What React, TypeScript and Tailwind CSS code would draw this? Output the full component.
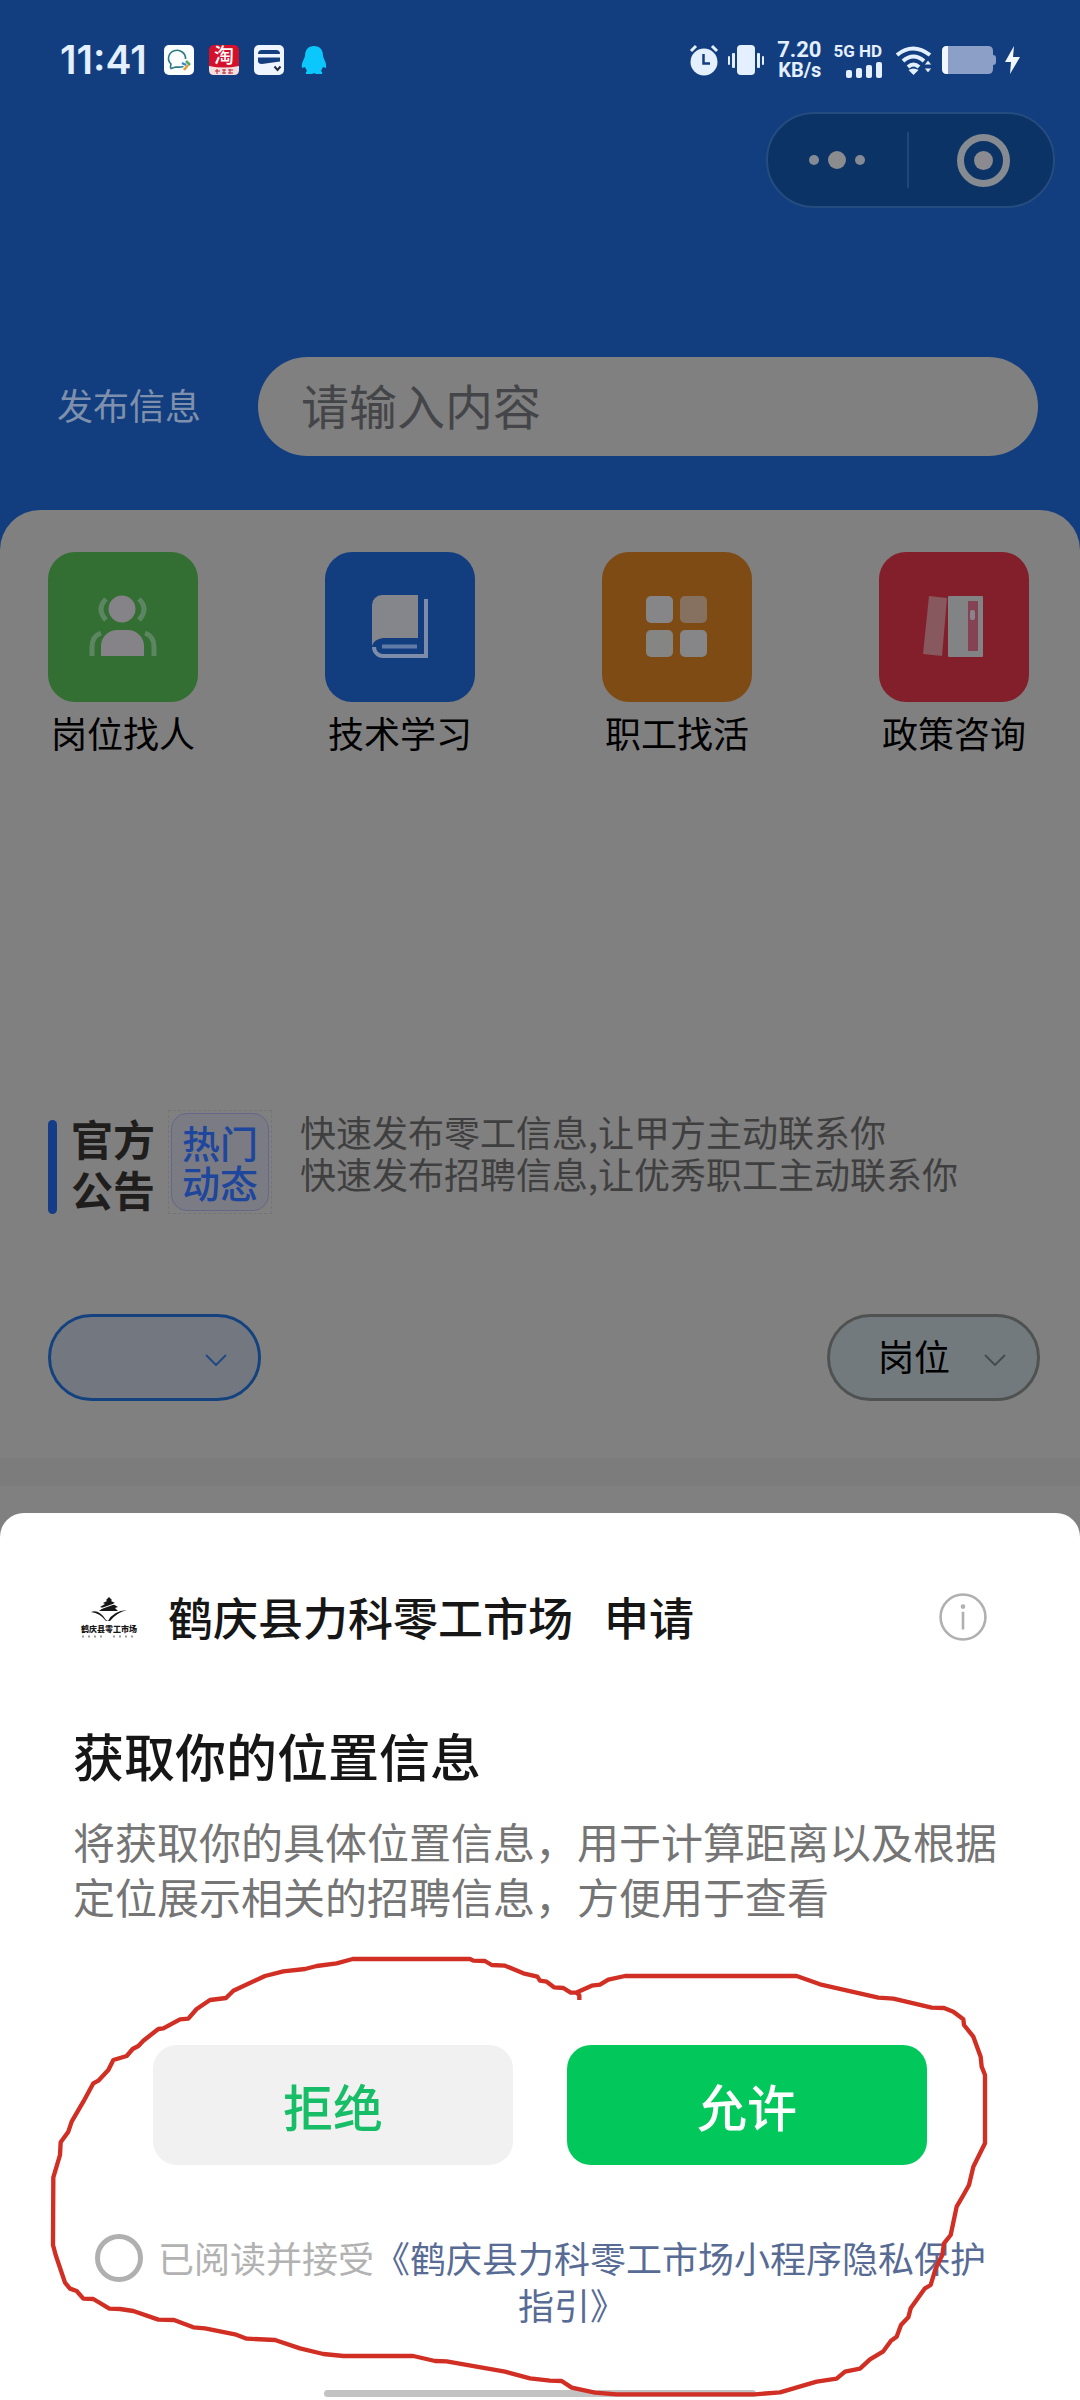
import * as React from "react"

const services = [
  { label: "岗位找人", tile: "bg-[#336e33]", icon: <PeopleIcon /> },
  { label: "技术学习", tile: "bg-[#123e80]", icon: <BookIcon /> },
  { label: "职工找活", tile: "bg-[#7f4b14]", icon: <GridIcon /> },
  { label: "政策咨询", tile: "bg-[#821f2b]", icon: <BinderIcon /> },
]

function PeopleIcon() {
  return (
    <svg viewBox="0 0 150 150" className="size-full" fill="none">
      <circle cx="74" cy="57" r="13.500" fill="#858387" />
      <path d="M53 104V94a16 16 0 0 1 16-16h11a16 16 0 0 1 16 16v10z" fill="#858387" />
      <path
        d="M58 47q-10 10 0 21M91 47q10 10 0 21M44 104V95q0-11 9-14M106 104V95q0-11-9-14"
        stroke="#5c8561"
        strokeWidth="5"
      />
    </svg>
  )
}

function BookIcon() {
  return (
    <svg viewBox="0 0 150 150" className="size-full" fill="none">
      <path d="M47 98V53a10 10 0 0 1 10-10h36v43H58q-9 1-11 8z" fill="#85868c" />
      <path d="M101 47v57H58a9 9 0 0 1-9-9" stroke="#7d8ca8" strokeWidth="4" />
      <path d="M57 94.500h35" stroke="#5f7ba6" strokeWidth="4" />
    </svg>
  )
}

function GridIcon() {
  return (
    <svg viewBox="0 0 150 150" className="size-full">
      <rect x="44" y="44" width="27" height="27" rx="5" fill="#868587" />
      <rect x="78" y="44" width="27" height="27" rx="5" fill="#86705f" />
      <rect x="44" y="78" width="27" height="27" rx="5" fill="#858683" />
      <rect x="78" y="78" width="27" height="27" rx="5" fill="#868587" />
    </svg>
  )
}

function BinderIcon() {
  return (
    <svg viewBox="0 0 150 150" className="size-full">
      <path d="M50 44l18 2-5 58-19-2z" fill="#88585f" />
      <rect x="69" y="44" width="35" height="61" rx="1" fill="#828384" />
      <rect x="89" y="49" width="10" height="50" fill="#844254" />
      <rect x="91" y="58" width="5" height="10" rx="2" fill="#8c8388" />
    </svg>
  )
}

function StatusBar() {
  return (
    <div className="flex h-[112px] items-start justify-between px-[60px] pt-[38px] text-[#e4efff]">
      <div className="flex h-[44px] items-center">
        <span className="w-[104px] font-['Inter'] text-[39px] font-semibold leading-[44px]">11:41</span>
        <div className="flex items-center gap-[15px]">
          <svg viewBox="0 0 30 30" className="size-[30px]">
            <rect width="30" height="30" rx="5" fill="#fbfdfd" />
            <path
              d="M19.500 21.500q-3 1-8 .5L7 23.500q-1-1 0-4.500A8.500 8 0 1 1 21.500 14"
              fill="none"
              stroke="#2d7a86"
              strokeWidth="1.600"
            />
            <path d="M18 18l4 2" stroke="#3d86c9" strokeWidth="2.500" />
            <path d="M22 16l4 4" stroke="#58a868" strokeWidth="2.500" />
            <path d="M24 20l-4 5" stroke="#e2a13a" strokeWidth="2.500" />
          </svg>
          <div className="flex size-[30px] flex-col items-center rounded-[5px] bg-[#d4112b]">
            <span className="h-[21px] text-[20px] font-medium leading-[20px] text-white">淘</span>
            <svg viewBox="0 0 30 9" className="h-[9px] w-[30px]">
              <path d="M0 0q15 3 30 0v4q0 5-5 5H5q-5 0-5-5z" fill="#f3dfe0" />
              <path d="M6 5h5M8 3v5M13 4h4M13 7h4M15 3v5M19 4h5M19 7h5M21 3v5" stroke="#b8283c" />
            </svg>
          </div>
          <svg viewBox="0 0 30 30" className="size-[30px]" fill="none">
            <rect width="30" height="30" rx="5" fill="#eff5ff" />
            <path d="M4 9q0-4 4-4h14q4 0 4 4zM4 12.500h22v4L8 19q-4 0-4-3z" fill="#143e80" />
            <path d="M20.500 21.500l3 3.500 3-3.500" stroke="#242b3d" strokeWidth="2" />
          </svg>
          <svg viewBox="0 0 30 30" className="size-[30px]">
            <path
              d="M15 1c6 0 9 4 9 10 1 4 4 7 3 12l-3-1-2 4q2 1 1 3h-6l-2-1-2 1H7q-1-2 1-3l-2-4-3 1c-1-5 2-8 3-12 0-6 3-10 9-10z"
              fill="#0bc7fb"
            />
          </svg>
        </div>
      </div>

      <div className="flex h-[44px] items-center">
        <svg viewBox="0 0 30 32" className="h-[32px] w-[30px]" fill="none">
          <circle cx="15" cy="18" r="13.500" fill="#e4efff" />
          <path d="M2 7l5-5M28 7l-5-5" stroke="#e4efff" strokeWidth="3" />
          <path d="M14.500 10v9.500H21" stroke="#143e80" strokeWidth="2.500" />
        </svg>
        <svg viewBox="0 0 36 30" className="ml-[9px] h-[30px] w-[36px]" fill="#e4efff">
          <rect x="9" width="18" height="30" rx="4" />
          <rect x="4" y="8" width="3" height="15" rx="1" />
          <rect x="0" y="11" width="2" height="9" rx="1" />
          <rect x="29" y="8" width="3" height="15" rx="1" />
          <rect x="34" y="11" width="2" height="9" rx="1" />
        </svg>
        <div className="ml-[13px] flex flex-col items-end font-['Roboto'] font-bold">
          <span className="text-[22px] leading-[20px]">7.20</span>
          <span className="text-[20px] leading-[20px]">KB/s</span>
        </div>
        <div className="ml-[12px] flex flex-col items-end gap-[2px] font-['Roboto'] font-bold">
          <span className="text-[17px] leading-[18px]">5G HD</span>
          <svg viewBox="0 0 36 16" className="h-[16px] w-[36px]" fill="#e4efff">
            <rect y="8" width="6" height="8" rx="2" />
            <rect x="10" y="6" width="6" height="10" rx="2" />
            <rect x="20" y="3" width="6" height="13" rx="2" />
            <rect x="30" width="6" height="16" rx="2" />
          </svg>
        </div>
        <svg viewBox="0 0 38 30" className="ml-[13px] h-[30px] w-[38px]" fill="none">
          <path d="M2 10q16-13 33 0M8 16q10.500-9 21 0M13 22q5.500-5 11 0" stroke="#e4efff" strokeWidth="4" />
          <path d="M13.500 25q5-3 10 0l-5 5z" fill="#e4efff" />
          <path d="M33 15l4 5h-8zM33 28l4-5h-8z" fill="#e4efff" stroke="#143e80" strokeWidth="1" />
        </svg>
        <svg viewBox="0 0 54 28" className="ml-[9px] h-[28px] w-[54px]">
          <path d="M5 0h41q5 0 5 5v4q3 0 3 3v4q0 3-3 3v4q0 5-5 5H5q-5 0-5-5V5q0-5 5-5z" fill="#8b9fc7" />
          <path d="M6 0v28H5q-5 0-5-5V5q0-5 5-5z" fill="#f2f7ff" />
        </svg>
        <svg viewBox="0 0 15 28" className="ml-[9px] h-[28px] w-[15px]" fill="#f2f7ff">
          <path d="M9 0L0 16h6L5 28l10-17H8z" />
        </svg>
      </div>
    </div>
  )
}

function Chevron({ className }: { className: string }) {
  return (
    <svg
      viewBox="0 0 22 12"
      className={`pointer-events-none absolute right-[34px] top-[40px] h-[12px] w-[22px] ${className}`}
      fill="none"
      stroke="currentColor"
      strokeWidth="2"
    >
      <path d="M1 1l10 10L21 1" />
    </svg>
  )
}

function BrandLogo() {
  return (
    <div className="flex w-[56px] shrink-0 flex-col items-center">
      <svg viewBox="0 0 36 24" className="h-[24px] w-[36px]" fill="#161616">
        <path d="M18 0l3 3-1 1 4 2-2 1 5 3-3 1 3 3H8l4-3-3-1 5-3-2-1 4-2-1-1z" />
        <path d="M0 15q8-3 15 8l2 1q5-10 19-11-11 3-17 11h-4Q9 16 0 15z" />
        <path d="M9 12l17-6" stroke="#fff" strokeWidth="1" />
      </svg>
      <span className="mt-[3px] whitespace-nowrap text-[8px] font-black leading-[9px] text-[#161616]">鹤庆县零工市场</span>
      <svg viewBox="0 0 54 3" className="mt-[2px] h-[3px] w-[54px]" stroke="#999">
        <path d="M0 1.500h22M31 1.500h23" strokeWidth="2" strokeDasharray="2 4" />
      </svg>
    </div>
  )
}

function PermissionSheet() {
  return (
    <section
      role="dialog"
      aria-labelledby="permission-title"
      className="relative rounded-t-[24px] bg-white px-[73px] pb-[3px] pt-[76px]"
    >
      <div className="flex h-[56px] items-center pl-2 pr-5">
        <BrandLogo />
        <p className="ml-[31px] flex gap-[31px] text-[45px] font-medium leading-[56px] text-[#161616]">
          <span>鹤庆县力科零工市场</span>
          <span>申请</span>
        </p>
        <button type="button" aria-label="说明" className="ml-auto size-[48px]">
          <svg viewBox="0 0 46 46" className="size-full" fill="none" stroke="#b0b0b0" strokeWidth="2.500">
            <circle cx="23" cy="23" r="21.500" />
            <path d="M23 18v17" />
            <circle cx="23" cy="13" r="1" />
          </svg>
        </button>
      </div>

      <h2 id="permission-title" className="mt-[80px] text-[51px] font-medium leading-[60px] text-[#161616]">
        获取你的位置信息
      </h2>
      <p className="mt-[28px] text-[42px] leading-[55px] text-[#757575]">
        将获取你的具体位置信息，用于计算距离以及根据定位展示相关的招聘信息，方便用于查看
      </p>

      <div className="mt-[122px] flex justify-center gap-[54px] text-[50px] font-medium">
        <button type="button" className="h-[120px] w-[360px] rounded-[24px] bg-[#f1f1f1] text-[#18bd68]">
          拒绝
        </button>
        <button type="button" className="h-[120px] w-[360px] rounded-[24px] bg-[#02c85c] text-white">
          允许
        </button>
      </div>

      <div className="mt-[69px] flex items-start gap-3 px-[22px]">
        <input
          id="agree"
          type="checkbox"
          className="size-[48px] shrink-0 appearance-none rounded-full border-[5px] border-[#b0b0b0] checked:bg-[#02c85c]"
        />
        <p className="-mr-[4px] flex-1 text-center text-[36px] leading-[47px] text-[#b2b2b2]">
          <label htmlFor="agree">已阅读并接受</label>
          <a href="#privacy" className="text-[#576b95]">
            《鹤庆县力科零工市场小程序隐私保护指引》
          </a>
        </p>
      </div>

      <div className="mx-auto mt-[62px] h-[7px] w-[432px] rounded-full bg-[#c2c2c2]" />

      {/* hand-drawn marker loop round the buttons and the consent line */}
      <svg
        viewBox="0 0 3240 1410"
        className="pointer-events-none absolute bottom-0 left-0 w-full"
        fill="none"
        stroke="#d12e24"
        strokeWidth="13"
        strokeLinejoin="round"
      >
        <path d="M1738 210V196L1730 188L1712 188L1690 174L1662 172L1640 155L1620 152L1612 140L1570 130L1515 107L1475 105L1455 93L1420 92L1410 87H1058L1010 100L950 108L915 117L850 124L795 138L700 182L678 204L630 210L590 237L565 266L540 268L490 295L475 297L430 332L415 348L398 357L380 378L340 390L325 420L295 452L280 460L250 515L215 575L205 605L182 637L180 675L160 742L159 945L167 975L195 1058L210 1076L230 1083L250 1106L280 1107L328 1136L360 1137L400 1143L475 1169L522 1170L580 1192L615 1195L705 1213L740 1226L825 1230L900 1255L970 1272L1030 1278H1240L1305 1293L1340 1294L1515 1325L1590 1345L1650 1352L1685 1353L1715 1373L1785 1388L1850 1393H2265L2340 1387L2450 1355L2510 1346L2535 1325L2580 1316L2610 1288L2650 1264L2673 1232L2690 1220L2703 1185L2725 1162L2732 1135L2775 1075L2792 1065L2807 1015L2827 975L2832 940L2852 915L2870 830L2892 792L2907 765L2920 710L2955 640V435L2945 410L2942 380L2920 320L2892 285L2890 268L2860 245L2832 234L2795 233L2680 206L2635 203L2460 163L2390 138H1875L1825 149L1800 164L1775 167L1728 188" />
      </svg>
    </section>
  )
}

export default function App() {
  return (
    <div className="flex min-h-screen flex-col bg-[#123e80] font-['Noto_Sans_CJK_SC',sans-serif]">
      <header className="pb-[54px]">
        <StatusBar />
        <div className="flex justify-end pr-[25px]">
          <div className="flex h-[96px] w-[289px] items-center rounded-full border-2 border-[#244c7f] bg-[#0c3366]">
            <button type="button" aria-label="更多" className="flex h-full flex-1 items-center justify-center gap-[9px]">
              <span className="size-[10px] rounded-full bg-[#858b95]" />
              <span className="size-[18px] rounded-full bg-[#8a8c8d]" />
              <span className="size-[10px] rounded-full bg-[#858b95]" />
            </button>
            <span className="h-[56px] w-[2px] bg-[#1f487c]" />
            <button type="button" aria-label="关闭" className="flex h-full flex-1 items-center justify-center pl-[6px]">
              <span className="flex size-[53px] items-center justify-center rounded-full border-[7px] border-[#868b92]">
                <span className="size-[19px] rounded-full bg-[#8b8a90]" />
              </span>
            </button>
          </div>
        </div>
        <div className="mt-[149px] flex items-center pl-[57px] pr-[42px]">
          <a href="#publish" className="w-[201px] pb-[6px] text-[36px] leading-[54px] text-[#7f90ac]">
            发布信息
          </a>
          <input
            type="text"
            aria-label="搜索"
            placeholder="请输入内容"
            className="h-[99px] min-w-0 flex-1 rounded-full bg-[#808080] px-[43px] pb-[6px] text-[48px] text-black placeholder:text-[#444548]"
          />
        </div>
      </header>

      <main className="flex-1 rounded-t-[40px] bg-[#808080] pt-[42px]">
        <nav className="flex justify-between pl-[48px] pr-[51px]">
          {services.map((item) => (
            <button key={item.label} type="button" className="w-[150px]">
              <span className={`block size-[150px] rounded-[27px] ${item.tile}`}>{item.icon}</span>
              <span className="mt-[3px] block text-[36px] leading-[54px] text-black">{item.label}</span>
            </button>
          ))}
        </nav>

        <div className="mt-[351px] flex h-[104px] items-end pl-[48px] pr-[40px]">
          <span className="h-[94px] w-[9px] shrink-0 rounded-full bg-[#153c87]" />
          <h3 className="ml-[14px] w-[84px] shrink-0 text-[42px] font-bold leading-[51px] text-[#1f1e1c]">官方公告</h3>
          <div className="ml-[13px] flex size-[104px] shrink-0 items-center justify-center border border-dashed border-[#757578]">
            <div className="flex size-[98px] items-center justify-center rounded-[16px] border border-[#66668a] bg-[#7b7b84]">
              <span className="w-[76px] text-[38px] font-medium leading-[40px] text-[#1d469c]">热门动态</span>
            </div>
          </div>
          <div className="ml-[28px] self-start text-[36px] leading-[42px] text-[#3f3f3f]">
            <p>快速发布零工信息,让甲方主动联系你</p>
            <p>快速发布招聘信息,让优秀职工主动联系你</p>
          </div>
        </div>

        <div className="mt-[100px] flex justify-between pl-[48px] pr-[40px]">
          <div className="relative">
            <select
              aria-label="地区"
              className="h-[87px] w-[213px] appearance-none rounded-full border-[3px] border-[#14427f] bg-[#737780] pb-[5px] pl-[48px] text-[36px] text-black"
            >
              <option value=""></option>
            </select>
            <Chevron className="text-[#234a80]" />
          </div>
          <div className="relative">
            <select
              aria-label="类型"
              className="h-[87px] w-[213px] appearance-none rounded-full border-[3px] border-[#505252] bg-[#737a7e] pb-[5px] pl-[48px] text-[36px] text-black"
            >
              <option>岗位</option>
            </select>
            <Chevron className="text-[#484b4e]" />
          </div>
        </div>

        <div className="mb-[27px] mt-[57px] h-[28px] bg-[#7c7c7c]" />
      </main>

      <div className="bg-[#808080]">
        <PermissionSheet />
      </div>
    </div>
  )
}
